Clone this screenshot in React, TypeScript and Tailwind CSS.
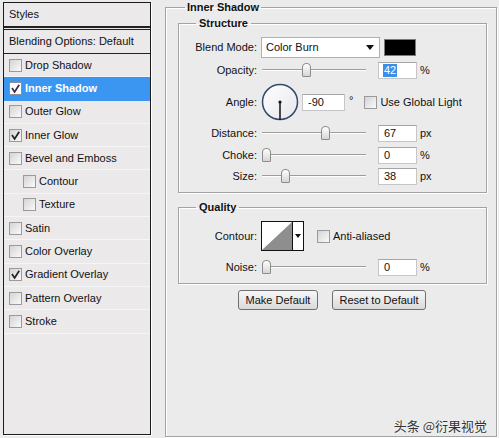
import React from "react";

function Check({ checked, white }: { checked?: boolean; white?: boolean }) {
  return (
    <span
      className={
        white
          ? "flex h-[13px] w-[13px] shrink-0 items-center justify-center border border-[#8f8f8f] bg-white"
          : "flex h-[13px] w-[13px] shrink-0 items-center justify-center border border-[#9a9a9a] bg-linear-to-br from-[#d4d4d4] to-[#fafafa]"
      }
    >
      {checked && (
        <svg viewBox="0 0 11 11" className="h-[11px] w-[11px]">
          <path d="M2 5 L4.6 9 L9.2 1.8" fill="none" stroke={white ? "#3a2a4a" : "#222"} strokeWidth="1.7" />
        </svg>
      )}
    </span>
  );
}

function Row({ label, checked, active, indent }: { label: string; checked?: boolean; active?: boolean; indent?: boolean }) {
  return (
    <div
      className={
        active
          ? "flex h-[23.3px] items-center bg-[#3a96f0] pl-[5px] font-bold text-white"
          : "flex h-[23.3px] items-center border-b border-[#f6f5f6] pl-[5px] text-[#111]"
      }
    >
      {indent && <span className="w-[14px] shrink-0" />}
      <Check checked={checked} white={active} />
      <span className="ml-[3px] whitespace-nowrap">{label}</span>
    </div>
  );
}

function Slider({ pos }: { pos: number }) {
  return (
    <div className="relative h-[18px] w-[104px] shrink-0">
      <div className="absolute left-0 right-0 top-[8px] h-[1px] bg-[#9c9c9c] shadow-[0_1px_0_#ffffff]" />
      <div
        className="absolute top-[2px] h-[14px] w-[9px] rounded-t-[4px] rounded-b-[1px] border border-[#8c8c8c] bg-linear-to-b from-[#ffffff] to-[#d6d6d6]"
        style={{ left: pos - 4.5 }}
      />
    </div>
  );
}

function Input({ value, w, selected }: { value: string; w: string; selected?: boolean }) {
  return (
    <div className={`${w} flex h-[17px] shrink-0 items-center border border-[#c6c6c6] border-t-[#a4a4a4] bg-white pl-[4px] text-[#111]`}>
      {selected ? <span className="bg-[#3b8fe9] px-[1px] leading-[13px] text-white">{value}</span> : <span className="pl-[1px]">{value}</span>}
    </div>
  );
}

function Label({ text }: { text: string }) {
  return <div className="w-[78px] shrink-0 text-right text-[#111]">{text}</div>;
}

export default function App() {
  return (
    <div className="relative h-[438px] w-[499px] overflow-hidden bg-[#ecebec] font-['Liberation_Sans',Arial,sans-serif] text-[11px] leading-[13px]">
      <div className="flex items-start">
        {/* Left panel */}
        <div className="ml-[3px] mt-[2px] flex h-[433px] w-[148px] shrink-0 flex-col border border-[#1c1c1c] bg-[#ebe9ea] shadow-[1px_1px_0_#ffffff]">
          <div className="flex h-[25px] items-center border-b-2 border-[#222] pl-[5px] text-[#111]">Styles</div>
          <div className="mt-[1px] flex h-[25px] items-center border-y border-[#222] pl-[5px] text-[#111]">Blending Options: Default</div>
          <Row label="Drop Shadow" />
          <Row label="Inner Shadow" checked active />
          <Row label="Outer Glow" />
          <Row label="Inner Glow" checked />
          <Row label="Bevel and Emboss" />
          <Row label="Contour" indent />
          <Row label="Texture" indent />
          <Row label="Satin" />
          <Row label="Color Overlay" />
          <Row label="Gradient Overlay" checked />
          <Row label="Pattern Overlay" />
          <Row label="Stroke" />
        </div>

        {/* Right panel */}
        <fieldset className="ml-[14px] mt-[1px] h-[436px] w-[332px] shrink-0 border border-[#a3a3a3] pl-[12px] shadow-[inset_1px_1px_0_#ffffff,1px_1px_0_#ffffff]">
          <legend className="ml-[7px] px-[2px] font-bold leading-[13px] text-[#111]">Inner Shadow</legend>

          <fieldset className="mt-[3px] w-[309px] border border-[#a3a3a3] pb-[7px] pt-[6px] shadow-[inset_1px_1px_0_#ffffff,1px_1px_0_#ffffff]">
            <legend className="ml-[17px] px-[3px] font-bold leading-[13px] text-[#111]">Structure</legend>

            <div className="flex h-[22px] items-center">
              <Label text="Blend Mode:" />
              <div className="ml-[4px] flex h-[21px] w-[119px] items-center justify-between border border-[#b0b0b0] bg-white pl-[4px] pr-[5px] text-[#111]">
                <span>Color Burn</span>
                <svg viewBox="0 0 8 5" className="h-[5px] w-[8px]"><path d="M0 0 H8 L4 5 Z" fill="#111" /></svg>
              </div>
              <div className="ml-[4px] h-[17px] w-[32px] border border-[#7a7a7a] bg-black" />
            </div>

            <div className="mt-[3px] flex h-[18px] items-center">
              <Label text="Opacity:" />
              <div className="ml-[5px]"><Slider pos={44} /></div>
              <div className="ml-[12px]"><Input value="42" w="w-[39px]" selected /></div>
              <span className="ml-[3px] text-[#111]">%</span>
            </div>

            <div className="mt-[4px] flex h-[38px] items-center">
              <Label text="Angle:" />
              <svg viewBox="0 0 38 38" className="ml-[4px] h-[38px] w-[38px] shrink-0">
                <defs>
                  <linearGradient id="dial" x1="0" y1="0" x2="1" y2="1">
                    <stop offset="0" stopColor="#ffffff" />
                    <stop offset="1" stopColor="#e6e6ec" />
                  </linearGradient>
                </defs>
                <circle cx="19" cy="19" r="17.5" fill="url(#dial)" stroke="#33496f" strokeWidth="1.5" />
                <line x1="19" y1="19" x2="19" y2="37" stroke="#111" strokeWidth="1.5" />
                <circle cx="19" cy="19" r="1.6" fill="#111" />
              </svg>
              <div className="ml-[3px]"><Input value="-90" w="w-[43px]" /></div>
              <span className="ml-[4px] self-start pt-[11px] text-[#111]">°</span>
              <div className="ml-[11px]"><Check /></div>
              <span className="ml-[3px] text-[#111]">Use Global Light</span>
            </div>

            <div className="mt-[3px] flex h-[18px] items-center">
              <Label text="Distance:" />
              <div className="ml-[5px]"><Slider pos={63} /></div>
              <div className="ml-[12px]"><Input value="67" w="w-[39px]" /></div>
              <span className="ml-[3px] text-[#111]">px</span>
            </div>

            <div className="mt-[4px] flex h-[18px] items-center">
              <Label text="Choke:" />
              <div className="ml-[5px]"><Slider pos={4} /></div>
              <div className="ml-[12px]"><Input value="0" w="w-[39px]" /></div>
              <span className="ml-[3px] text-[#111]">%</span>
            </div>

            <div className="mt-[3px] flex h-[18px] items-center">
              <Label text="Size:" />
              <div className="ml-[5px]"><Slider pos={23} /></div>
              <div className="ml-[12px]"><Input value="38" w="w-[39px]" /></div>
              <span className="ml-[3px] text-[#111]">px</span>
            </div>
          </fieldset>

          <fieldset className="mt-[8px] w-[309px] border border-[#a3a3a3] pb-[7px] pt-[7px] shadow-[inset_1px_1px_0_#ffffff,1px_1px_0_#ffffff]">
            <legend className="ml-[17px] px-[3px] font-bold leading-[13px] text-[#111]">Quality</legend>

            <div className="flex h-[30px] items-center">
              <Label text="Contour:" />
              <div className="ml-[4px] flex h-[30px] w-[43px] shrink-0 border border-[#111] bg-white">
                <svg viewBox="0 0 30 28" preserveAspectRatio="none" className="h-full w-[30px]">
                  <polygon points="0,28 30,0 30,28" fill="#8e8e8e" />
                </svg>
                <div className="flex flex-1 items-center justify-center border-l border-[#111]">
                  <svg viewBox="0 0 6 4" className="h-[4px] w-[6px]"><path d="M0 0 H6 L3 4 Z" fill="#111" /></svg>
                </div>
              </div>
              <div className="ml-[13px]"><Check /></div>
              <span className="ml-[3px] text-[#111]">Anti-aliased</span>
            </div>

            <div className="mt-[7px] flex h-[18px] items-center">
              <Label text="Noise:" />
              <div className="ml-[5px]"><Slider pos={4} /></div>
              <div className="ml-[12px]"><Input value="0" w="w-[39px]" /></div>
              <span className="ml-[3px] text-[#111]">%</span>
            </div>
          </fieldset>

          <div className="mt-[6px] flex gap-[14px] pl-[60px]">
            <button className="h-[20px] w-[80px] rounded-[3px] border border-[#707070] bg-linear-to-b from-[#f7f7f7] to-[#dadada] text-[11px] text-[#111]">Make Default</button>
            <button className="h-[20px] w-[94px] rounded-[3px] border border-[#707070] bg-linear-to-b from-[#f7f7f7] to-[#dadada] text-[11px] text-[#111]">Reset to Default</button>
          </div>
        </fieldset>
      </div>

      <div className="absolute bottom-[5px] right-[12px] font-['Noto_Sans_CJK_SC',sans-serif] text-[13px] leading-[15px] text-[#333] [text-shadow:0_0_2px_#ffffff]">
        头条 @衍果视觉
      </div>
    </div>
  );
}
